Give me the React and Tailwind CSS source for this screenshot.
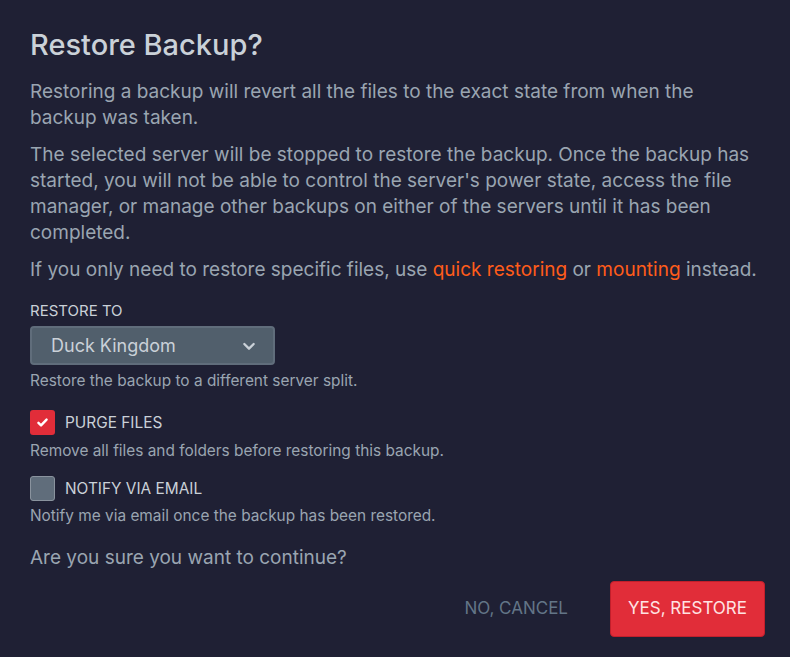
export default function App() {
  return (
    <div
      className="min-h-[657px] w-full bg-[#1f2034] px-[30px] pt-[29px] pb-5 text-[#9aa5b1]"
      style={{ fontFamily: "Inter, 'Noto Sans', sans-serif" }}
    >
      <h2 className="text-[29px] leading-[32px] font-medium text-[#cad1d8]">
        Restore Backup?
      </h2>

      <div className="mt-[18px] text-[19px] leading-[26px]">
        <p>
          Restoring a backup will revert all the files to the exact state from
          when the backup was taken.
        </p>
        <p className="mt-[11px]">
          The selected server will be stopped to restore the backup. Once the
          backup has started, you will not be able to control the server's
          power state, access the file manager, or manage other backups on
          either of the servers until it has been completed.
        </p>
        <p className="mt-[11px]">
          If you only need to restore specific files, use{" "}
          <span className="text-[#ff5c1a]">quick restoring</span> or{" "}
          <span className="text-[#ff5c1a]">mounting</span> instead.
        </p>
      </div>

      <div className="mt-[18px]">
        <label className="block text-[15px] leading-[20px] uppercase text-[#cad1d8]">
          Restore To
        </label>
        <button className="mt-[5px] flex h-[39px] w-[245px] items-center justify-between rounded border-2 border-[#606d7b] bg-[#515f6c] pl-[19px] pr-[16px] text-[18px] text-[#cad1d8]">
          <span>Duck Kingdom</span>
          <svg width="16" height="16" viewBox="0 0 24 24" fill="none" stroke="#cad1d8" strokeWidth="3.5" strokeLinecap="round" strokeLinejoin="round">
            <path d="M5 9l7 7 7-7" />
          </svg>
        </button>
        <p className="mt-[6px] text-[15.4px] leading-[20px]">
          Restore the backup to a different server split.
        </p>
      </div>

      <div className="mt-[19px]">
        <div className="flex items-center gap-[10px]">
          <span className="flex h-[25px] w-[25px] items-center justify-center rounded-[3px] bg-[#e12d39]">
            <svg width="13" height="13" viewBox="0 0 16 16" fill="none" stroke="white" strokeWidth="3" strokeLinecap="round" strokeLinejoin="round">
              <path d="M3 8.5l3.2 3L13 4.5" />
            </svg>
          </span>
          <span className="text-[15.4px] uppercase text-[#cad1d8]">Purge Files</span>
        </div>
        <p className="mt-[6px] text-[15.4px] leading-[20px]">
          Remove all files and folders before restoring this backup.
        </p>
      </div>

      <div className="mt-[15px]">
        <div className="flex items-center gap-[10px]">
          <span className="h-[25px] w-[25px] rounded-[3px] border border-[#8a939e] bg-[#606d7b]" />
          <span className="text-[15.4px] uppercase text-[#cad1d8]">Notify Via Email</span>
        </div>
        <p className="mt-[5px] text-[15.4px] leading-[20px]">
          Notify me via email once the backup has been restored.
        </p>
      </div>

      <p className="mt-[19px] text-[19px] leading-[26px]">
        Are you sure you want to continue?
      </p>

      <div className="mt-[10px] -mr-[5px] flex items-center justify-end gap-[20px]">
        <button className="h-[56px] px-[22px] text-[17px] uppercase text-[#637587]">
          No, Cancel
        </button>
        <button className="h-[56px] w-[155px] rounded border border-[#c21f2b] bg-[#e12d39] text-[17px] uppercase text-[#ffe3e3]">
          Yes, Restore
        </button>
      </div>
    </div>
  );
}
